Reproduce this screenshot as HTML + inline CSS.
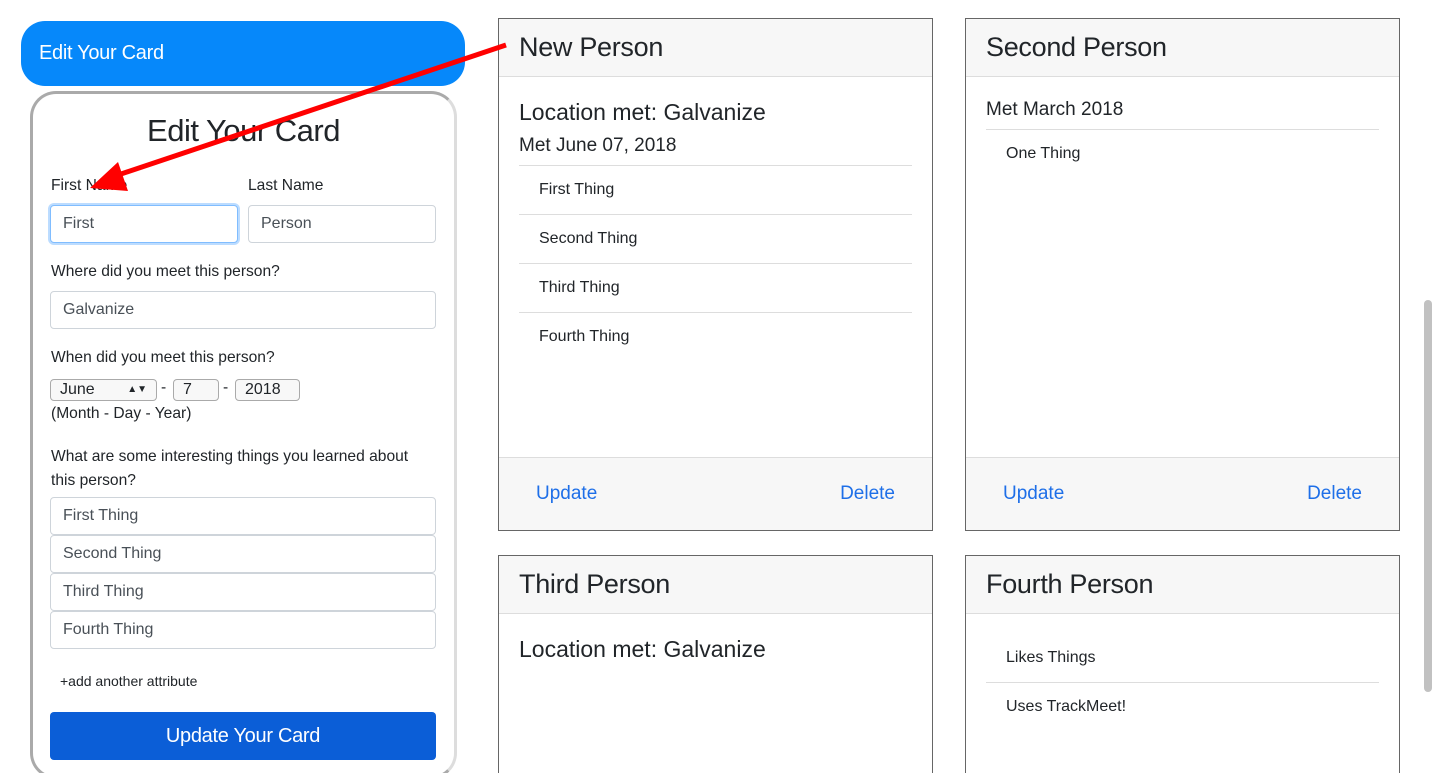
<!DOCTYPE html>
<html><head><style>
*{box-sizing:border-box}
html,body{margin:0;width:1435px;height:773px;overflow:hidden}
body{background:#fff;font-family:"Liberation Sans",sans-serif;color:#212529;position:relative}
#w{position:absolute;left:0;top:0;width:1435px;height:773px;overflow:hidden}
.abs{position:absolute}
.btnTop{left:21px;top:21px;width:444px;height:65px;background:#0688fa;border-radius:24px;color:#fff;font-size:20px;padding:21px 18px;letter-spacing:-.3px}
.form{left:30px;top:91px;width:427px;height:688px;border:3px solid #aaa;border-right-color:#ddd;border-radius:26px}
.lbl{font-size:15.6px}
.inp{border:1px solid #ced4da;border-radius:4px;height:38px;font-size:16px;color:#495057;padding:9px 12px;background:#fff}
.sel{border:1px solid #aaa;border-radius:4px;height:22px;font-size:16px;padding:1px 9px;background:#f8f8f8}
.card{border:1px solid #666;background:#fff}
.hd{position:absolute;left:0;right:0;top:0;height:58px;background:#f7f7f7;border-bottom:1px solid #ddd;font-size:27px;padding:13px 20px;letter-spacing:-.3px}
.ft{position:absolute;left:0;right:0;bottom:0;height:73px;background:#f7f7f7;border-top:1px solid #ddd;font-size:19px;color:#1e6fe8}
.li{position:absolute;left:20px;right:20px;height:49px;border-bottom:1px solid #ddd;font-size:16px;padding:15px 20px}
</style></head><body><div id="w">
<div class="abs btnTop">Edit Your Card</div>
<div class="abs form"></div>
<div class="abs" style="left:30px;width:427px;top:113px;text-align:center;font-size:31px;letter-spacing:-.5px">Edit Your Card</div>
<div class="abs lbl" style="left:51px;top:177px">First Name</div>
<div class="abs lbl" style="left:248px;top:177px">Last Name</div>
<div class="abs inp" style="left:50px;top:205px;width:188px;border-color:#80bdff;box-shadow:0 0 0 2px #bcdcff">First</div>
<div class="abs inp" style="left:248px;top:205px;width:188px">Person</div>
<div class="abs lbl" style="left:51px;top:263px">Where did you meet this person?</div>
<div class="abs inp" style="left:50px;top:291px;width:386px">Galvanize</div>
<div class="abs lbl" style="left:51px;top:349px">When did you meet this person?</div>
<div class="abs sel" style="left:50px;top:379px;width:107px">June<span style="float:right;font-size:10px;line-height:18px">▲▼</span></div>
<div class="abs lbl" style="left:161px;top:379px">-</div>
<div class="abs sel" style="left:173px;top:379px;width:46px">7</div>
<div class="abs lbl" style="left:223px;top:379px">-</div>
<div class="abs sel" style="left:235px;top:379px;width:65px">2018</div>
<div class="abs lbl" style="left:51px;top:405px">(Month - Day - Year)</div>
<div class="abs lbl" style="left:51px;top:445px;width:385px;line-height:24px">What are some interesting things you learned about<br>this person?</div>
<div class="abs inp" style="left:50px;top:497px;width:386px">First Thing</div>
<div class="abs inp" style="left:50px;top:535px;width:386px">Second Thing</div>
<div class="abs inp" style="left:50px;top:573px;width:386px">Third Thing</div>
<div class="abs inp" style="left:50px;top:611px;width:386px">Fourth Thing</div>
<div class="abs" style="left:60px;top:673px;font-size:14px">+add another attribute</div>
<div class="abs" style="left:50px;top:712px;width:386px;height:48px;background:#0b5ed7;border-radius:4px;color:#fff;font-size:20px;text-align:center;padding-top:13px;letter-spacing:-.3px">Update Your Card</div>

<div class="abs card" style="left:498px;top:18px;width:435px;height:513px">
 <div class="hd">New Person</div>
 <div class="abs" style="left:20px;top:80px;font-size:23px">Location met: Galvanize</div>
 <div class="abs" style="left:20px;top:116px;font-size:19px">Met June 07, 2018</div>
 <div class="abs" style="left:20px;right:20px;top:146px;border-top:1px solid #ddd"></div>
 <div class="li" style="top:147px">First Thing</div>
 <div class="li" style="top:196px">Second Thing</div>
 <div class="li" style="top:245px">Third Thing</div>
 <div class="li" style="top:294px;border:0">Fourth Thing</div>
 <div class="ft"><span class="abs" style="left:37px;top:25px">Update</span><span class="abs" style="right:37px;top:25px">Delete</span></div>
</div>
<div class="abs card" style="left:965px;top:18px;width:435px;height:513px">
 <div class="hd">Second Person</div>
 <div class="abs" style="left:20px;top:80px;font-size:19px">Met March 2018</div>
 <div class="abs" style="left:20px;right:20px;top:110px;border-top:1px solid #ddd"></div>
 <div class="li" style="top:111px;border:0">One Thing</div>
 <div class="ft"><span class="abs" style="left:37px;top:25px">Update</span><span class="abs" style="right:37px;top:25px">Delete</span></div>
</div>
<div class="abs card" style="left:498px;top:555px;width:435px;height:219px">
 <div class="hd">Third Person</div>
 <div class="abs" style="left:20px;top:80px;font-size:23px">Location met: Galvanize</div>
</div>
<div class="abs card" style="left:965px;top:555px;width:435px;height:219px">
 <div class="hd">Fourth Person</div>
 <div class="li" style="top:78px">Likes Things</div>
 <div class="li" style="top:127px;border:0">Uses TrackMeet!</div>
</div>
<div class="abs" style="left:1424px;top:300px;width:8px;height:392px;background:#c1c1c1;border-radius:4px"></div>
<svg class="abs" style="left:0;top:0" width="1435" height="773">
 <line x1="506" y1="45" x2="115" y2="176" stroke="#f00" stroke-width="5"/>
 <polygon points="90,188 118,162 128,191" fill="#f00"/>
</svg>
</div></body></html>
